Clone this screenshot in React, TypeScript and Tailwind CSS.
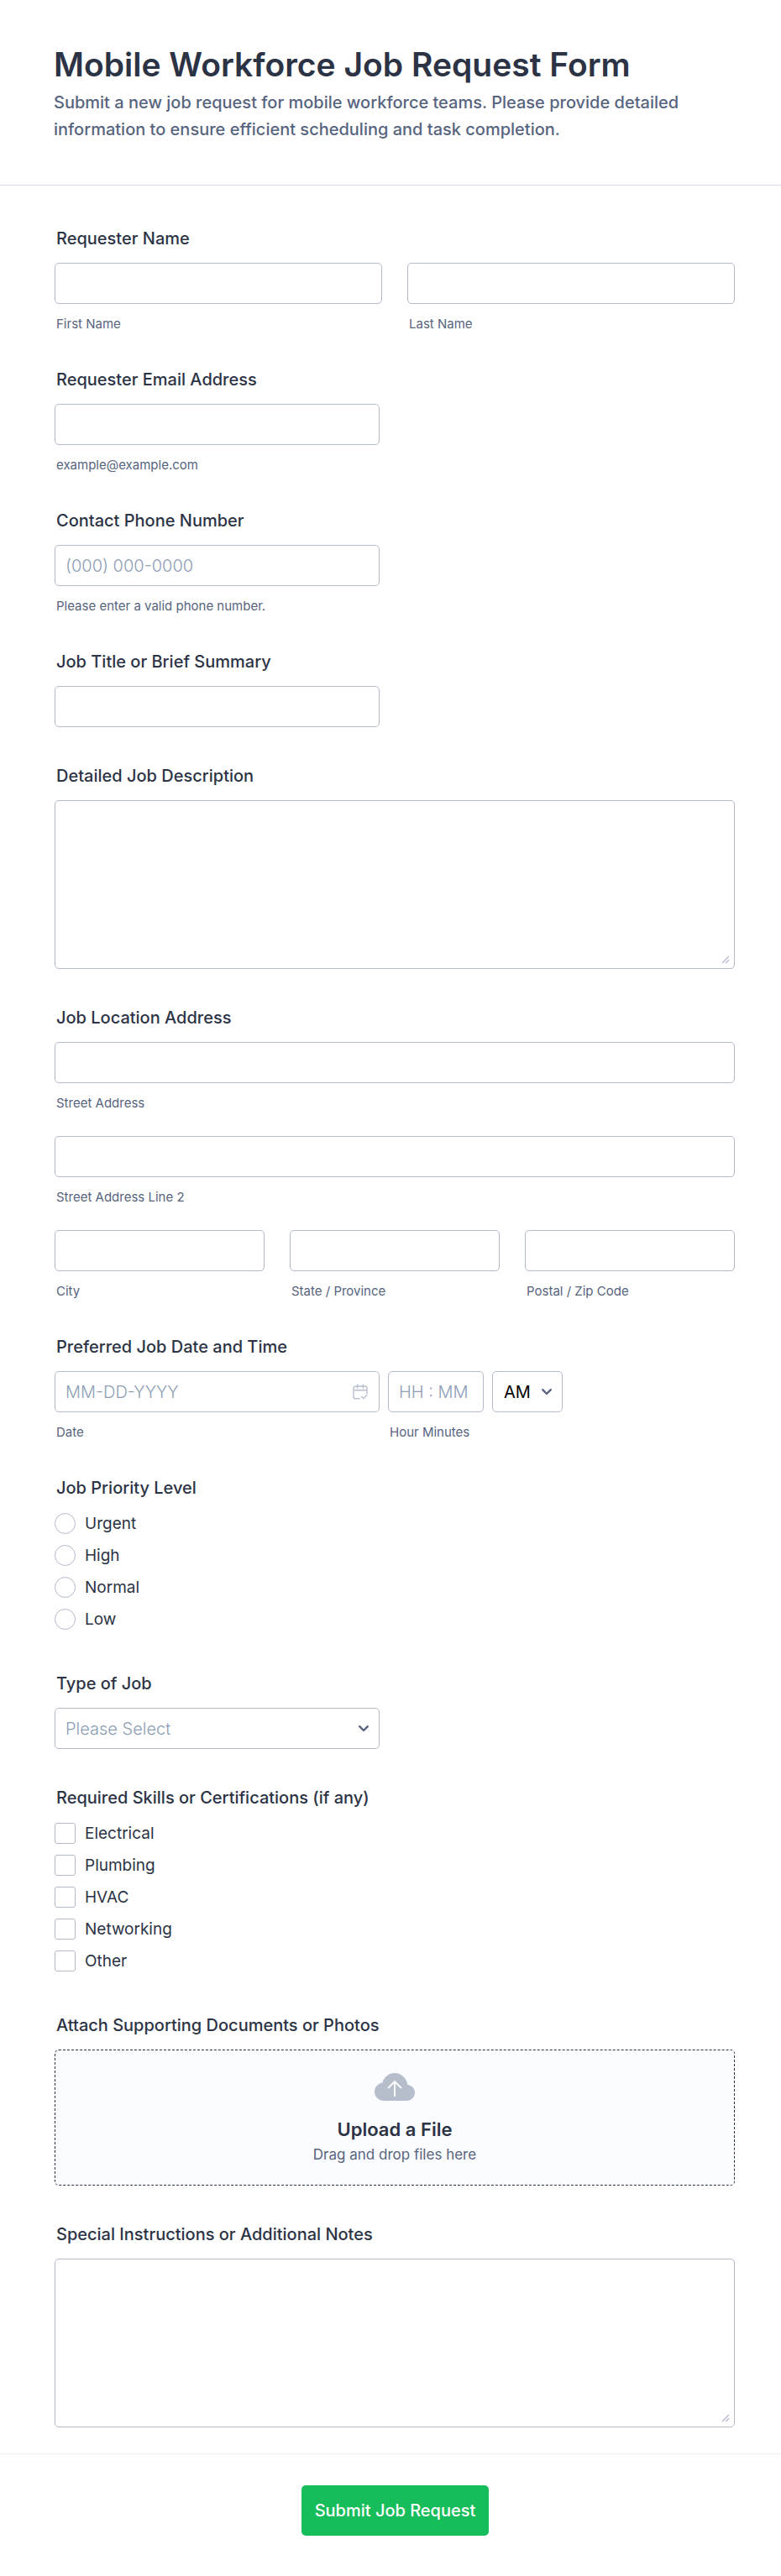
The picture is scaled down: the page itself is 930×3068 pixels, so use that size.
import { useId, type ReactNode } from 'react'

const box = 'block h-[49px] w-full rounded-[5px] border border-[#b2b9ca] bg-white px-3 text-xl font-light text-[#2c3345] placeholder:text-[#8d9db5] placeholder:opacity-100'

const Field = ({ label, htmlFor, children }: { label: string; htmlFor: string; children: ReactNode }) => (
  <div>
    <label htmlFor={htmlFor} className="mb-[17px] block px-0.5 text-xl leading-6 font-medium">{label}</label>
    {children}
  </div>
)

const Group = ({ label, children }: { label: string; children: ReactNode }) => (
  <fieldset>
    <legend className="mb-[17px] block px-0.5 text-xl leading-6 font-medium">{label}</legend>
    {children}
  </fieldset>
)

const Sub = ({ htmlFor, children }: { htmlFor: string; children: ReactNode }) => (
  <label htmlFor={htmlFor} className="mt-[15px] block px-0.5 text-[15px] leading-[17px] text-[#57647e]">{children}</label>
)

function SubInput({ label }: { label: string }) {
  const id = useId()
  return (
    <div>
      <input id={id} type="text" className={box} />
      <Sub htmlFor={id}>{label}</Sub>
    </div>
  )
}

const Chevron = () => (
  <svg viewBox="0 0 14 10" className="pointer-events-none absolute top-5 right-3 h-2.5 w-3.5" fill="none" stroke="#57647e" strokeWidth="2.4" strokeLinecap="round" strokeLinejoin="round"><path d="M2.2 2.2 7 7l4.8-4.8" /></svg>
)

const Area = ({ id }: { id: string }) => (
  <div className="relative">
    <textarea id={id} className="block h-[201px] w-full resize-none rounded-[5px] border border-[#b2b9ca] bg-white px-3 py-2 text-xl font-light" />
    <svg viewBox="0 0 10 10" className="pointer-events-none absolute right-1.5 bottom-1.5 h-2.5 w-2.5" fill="none" stroke="#b2b9ca" strokeWidth="1.3"><path d="M1 9 9 1M5.2 9 9 5.2" /></svg>
  </div>
)

function Choices({ type, name, items }: { type: 'radio' | 'checkbox'; name: string; items: string[] }) {
  return (
    <div className="flex flex-col items-start gap-[13px] pt-px pb-1.5">
      {items.map(i => (
        <label key={i} className="flex h-[25px] items-center gap-[11px] text-[19px] leading-6">
          <input type={type} name={name} value={i} className={`size-[25px] shrink-0 appearance-none border border-[#b2b9ca] bg-white checked:bg-[#18bd5b] ${type === 'radio' ? 'rounded-full' : 'rounded-[3px]'}`} />
          {i}
        </label>
      ))}
    </div>
  )
}

export default function App() {
  return (
    <form className="min-h-screen bg-white font-['Inter',sans-serif] text-[#2c3345]" onSubmit={e => e.preventDefault()}>
      <header className="border-b border-[#d7d9e5] pt-[51px] pr-[55px] pb-[50px] pl-16">
        <h1 className="text-[39px] leading-[52px] font-semibold">Mobile Workforce Job Request Form</h1>
        <p className="mt-[3px] max-w-[760px] text-xl leading-8 font-medium text-[#57647e]">Submit a new job request for mobile workforce teams. Please provide detailed information to ensure efficient scheduling and task completion.</p>
      </header>

      <div className="flex flex-col gap-[46px] pt-[51px] pr-[55px] pb-[31px] pl-[65px]">
        <Group label="Requester Name">
          <div className="grid grid-cols-2 gap-[30px]">
            <SubInput label="First Name" />
            <SubInput label="Last Name" />
          </div>
        </Group>
        <Field label="Requester Email Address" htmlFor="email">
          <input id="email" type="email" className={`${box} max-w-[387px]`} />
          <Sub htmlFor="email">example@example.com</Sub>
        </Field>
        <Field label="Contact Phone Number" htmlFor="phone">
          <input id="phone" type="tel" placeholder="(000) 000-0000" className={`${box} max-w-[387px]`} />
          <Sub htmlFor="phone">Please enter a valid phone number.</Sub>
        </Field>
        <Field label="Job Title or Brief Summary" htmlFor="title">
          <input id="title" type="text" className={`${box} max-w-[387px]`} />
        </Field>
        <Field label="Detailed Job Description" htmlFor="description"><Area id="description" /></Field>

        <Group label="Job Location Address">
          <div className="flex flex-col gap-[31px]">
            <SubInput label="Street Address" />
            <SubInput label="Street Address Line 2" />
            <div className="grid grid-cols-3 gap-[30px]">
              <SubInput label="City" />
              <SubInput label="State / Province" />
              <SubInput label="Postal / Zip Code" />
            </div>
          </div>
        </Group>

        <Group label="Preferred Job Date and Time">
          <div className="flex items-start gap-2.5">
            <div className="w-full max-w-[387px]">
              <div className="relative">
                <input id="date" type="text" placeholder="MM-DD-YYYY" className={box} />
                <svg viewBox="0 0 18 20" className="pointer-events-none absolute top-[15px] right-3.5 h-5 w-[18px]" fill="none" stroke="#b8bfd0" strokeWidth="1.4" strokeLinecap="round" strokeLinejoin="round">
                  <path d="M8 17.8H3.2A2.2 2.2 0 0 1 1 15.6V5.2A2.2 2.2 0 0 1 3.2 3h11.6A2.2 2.2 0 0 1 17 5.2v6.6M1 7.8h16M5.6 1v4.2M12.4 1v4.2M10.6 15.4l2.2 2.2 4-4" />
                </svg>
              </div>
              <Sub htmlFor="date">Date</Sub>
            </div>
            <div className="w-[114px]">
              <input id="time" type="text" placeholder="HH : MM" className={box} />
              <Sub htmlFor="time">Hour Minutes</Sub>
            </div>
            <div className="relative w-[84px]">
              <select aria-label="AM or PM" className="block h-[49px] w-full appearance-none rounded-[5px] border border-[#b2b9ca] bg-white pl-[13px] text-xl font-normal text-black"><option>AM</option><option>PM</option></select>
              <Chevron />
            </div>
          </div>
        </Group>

        <Group label="Job Priority Level"><Choices type="radio" name="priority" items={['Urgent', 'High', 'Normal', 'Low']} /></Group>

        <Field label="Type of Job" htmlFor="type">
          <div className="relative max-w-[387px]">
            <select id="type" className="block h-[49px] w-full appearance-none rounded-[5px] border border-[#b2b9ca] bg-white px-3 text-xl font-light text-[#8d9db5]">
              <option>Please Select</option>
            </select>
            <Chevron />
          </div>
        </Field>

        <Group label="Required Skills or Certifications (if any)"><Choices type="checkbox" name="skills" items={['Electrical', 'Plumbing', 'HVAC', 'Networking', 'Other']} /></Group>

        <Group label="Attach Supporting Documents or Photos">
          <label className="flex flex-col items-center rounded-[5px] border border-dashed border-[#2c3345] bg-[#fbfcff] pt-[27px] pb-6">
            <input type="file" className="sr-only" />
            <svg viewBox="0 0 48 33" className="h-[33px] w-12">
              <path d="M11 33C4.900 33 0 28.300 0 22.300 0 16.900 4 12.200 9.300 11.400 11.200 4.800 17 0 24 0c7.800 0 14 5.900 15.300 13.700C44.200 14.600 48 18.300 48 23.300 48 28.700 43.700 33 38.300 33Z" fill="#b6bdcb" />
              <path d="M24 28V10.500M16 18l8-8 8 8" fill="none" stroke="#fff" strokeWidth="1.800" />
            </svg>
            <span className="mt-5 text-[22px] leading-7 font-semibold">Upload a File</span>
            <span className="mt-1 text-[17px] leading-6 text-[#57647e]">Drag and drop files here</span>
          </label>
        </Group>
        <Field label="Special Instructions or Additional Notes" htmlFor="notes"><Area id="notes" /></Field>
      </div>

      <footer className="flex justify-center border-t border-[#ecedf3] pt-[37px] pr-[45px] pb-12 pl-14">
        <button type="submit" className="h-[60px] rounded-[5px] bg-[#18bd5b] px-4 text-xl font-medium text-white">Submit Job Request</button>
      </footer>
    </form>
  )
}
